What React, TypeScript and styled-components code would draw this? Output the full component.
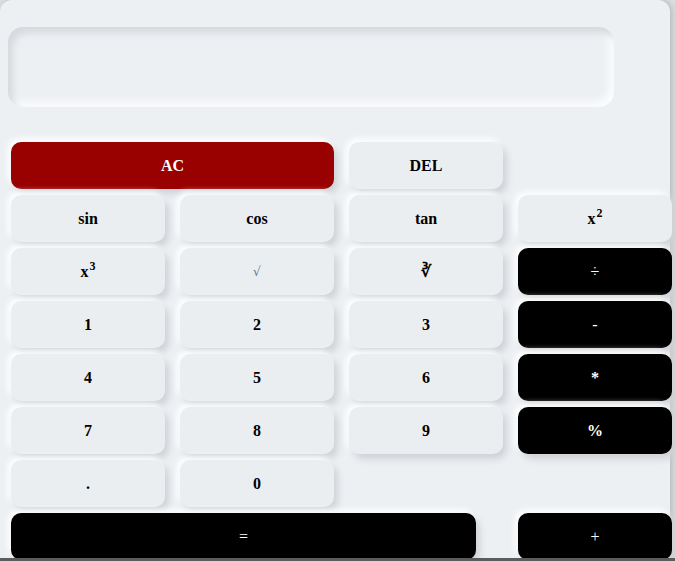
import React from "react";
import styled, { createGlobalStyle, css } from "styled-components";

const Global = createGlobalStyle`
  html, body { margin: 0; padding: 0; background: #dcdfe2; }
  body { font-family: "Liberation Serif", "Times New Roman", serif; }
`;

const Page = styled.div`
  width: 675px;
  height: 561px;
  overflow: hidden;
  display: flex;
  flex-direction: column;
`;

const Card = styled.div`
  width: 670px;
  height: 558px;
  flex: none;
  box-sizing: border-box;
  background: #edf0f3;
  border-radius: 12px 12px 0 0;
  box-shadow: 2px 0 6px rgba(0, 0, 0, 0.18);
  padding: 27px 0 0 8px;
  display: flex;
  flex-direction: column;
`;

const BottomLine = styled.div`
  position: relative;
  z-index: 1;
  height: 3px;
  flex: none;
  background: #5c5c5c;
`;

const Display = styled.div`
  width: 606px;
  height: 80px;
  flex: none;
  border-radius: 15px;
  background: #edf0f3;
  box-shadow: inset 5px 6px 7px #d6d9dd, inset -5px -5px 7px #fbfcfd;
`;

const Keys = styled.div`
  margin: 35px 0 0 3px;
  display: grid;
  grid-template-columns: 154px 154px 154px 154px;
  grid-template-rows: repeat(8, 47px);
  column-gap: 15px;
  row-gap: 6px;
`;

type Variant = "light" | "red" | "dark";

const Key = styled.button<{ $variant?: Variant; $area?: string; $w?: number }>`
  border: none;
  border-radius: 10px;
  font-family: "Liberation Serif", "Times New Roman", serif;
  font-weight: bold;
  font-size: 16px;
  display: flex;
  align-items: center;
  justify-content: center;
  padding: 0;
  cursor: pointer;
  ${(p) => p.$area && css`grid-column: ${p.$area};`}
  ${(p) => p.$w && css`width: ${p.$w}px; justify-self: start;`}
  ${(p) =>
    p.$variant === "red"
      ? css`
          background: #990000;
          color: #fff;
          box-shadow: 4px 5px 7px #cfd2d6, -3px -3px 6px #ffffff;
        `
      : p.$variant === "dark"
      ? css`
          background: #000;
          color: #fff;
          box-shadow: 4px 5px 7px #cfd2d6, -3px -3px 6px #ffffff;
        `
      : css`
          background: #ebeef1;
          color: #000;
          box-shadow: 4px 5px 7px #cfd2d6, -3px -3px 6px #ffffff;
        `}
`;

const Label = styled.span`
  display: inline-block;
  line-height: 18px;
`;

const Sup = styled.sup`
  font-size: 12px;
  line-height: 0;
  vertical-align: baseline;
  position: relative;
  top: -7px;
  margin-left: 1px;
`;

const Thin = styled.span`
  font-weight: normal;
`;

const Root = styled.span`
  font-weight: normal;
  color: #6c7a93;
  font-family: "DejaVu Sans", sans-serif;
  font-size: 13px;
`;

export default function App() {
  return (
    <>
      <Global />
      <Page>
        <Card>
          <Display />
          <Keys>
            <Key $variant="red" $area="1 / span 2">AC</Key>
            <Key>DEL</Key>
            <Key $area="1">sin</Key>
            <Key>cos</Key>
            <Key>tan</Key>
            <Key>
              <Label>
                x<Sup>2</Sup>
              </Label>
            </Key>
            <Key>
              <Label>
                x<Sup>3</Sup>
              </Label>
            </Key>
            <Key>
              <Root>√</Root>
            </Key>
            <Key>∛</Key>
            <Key $variant="dark">
              <Thin>÷</Thin>
            </Key>
            <Key>1</Key>
            <Key>2</Key>
            <Key>3</Key>
            <Key $variant="dark">
              <Thin>-</Thin>
            </Key>
            <Key>4</Key>
            <Key>5</Key>
            <Key>6</Key>
            <Key $variant="dark">*</Key>
            <Key>7</Key>
            <Key>8</Key>
            <Key>9</Key>
            <Key $variant="dark">%</Key>
            <Key>.</Key>
            <Key>0</Key>
            <Key $variant="dark" $area="1 / span 3" $w={465}>
              <Thin>=</Thin>
            </Key>
            <Key $variant="dark" $area="4">
              <Thin>+</Thin>
            </Key>
          </Keys>
        </Card>
        <BottomLine />
      </Page>
    </>
  );
}
